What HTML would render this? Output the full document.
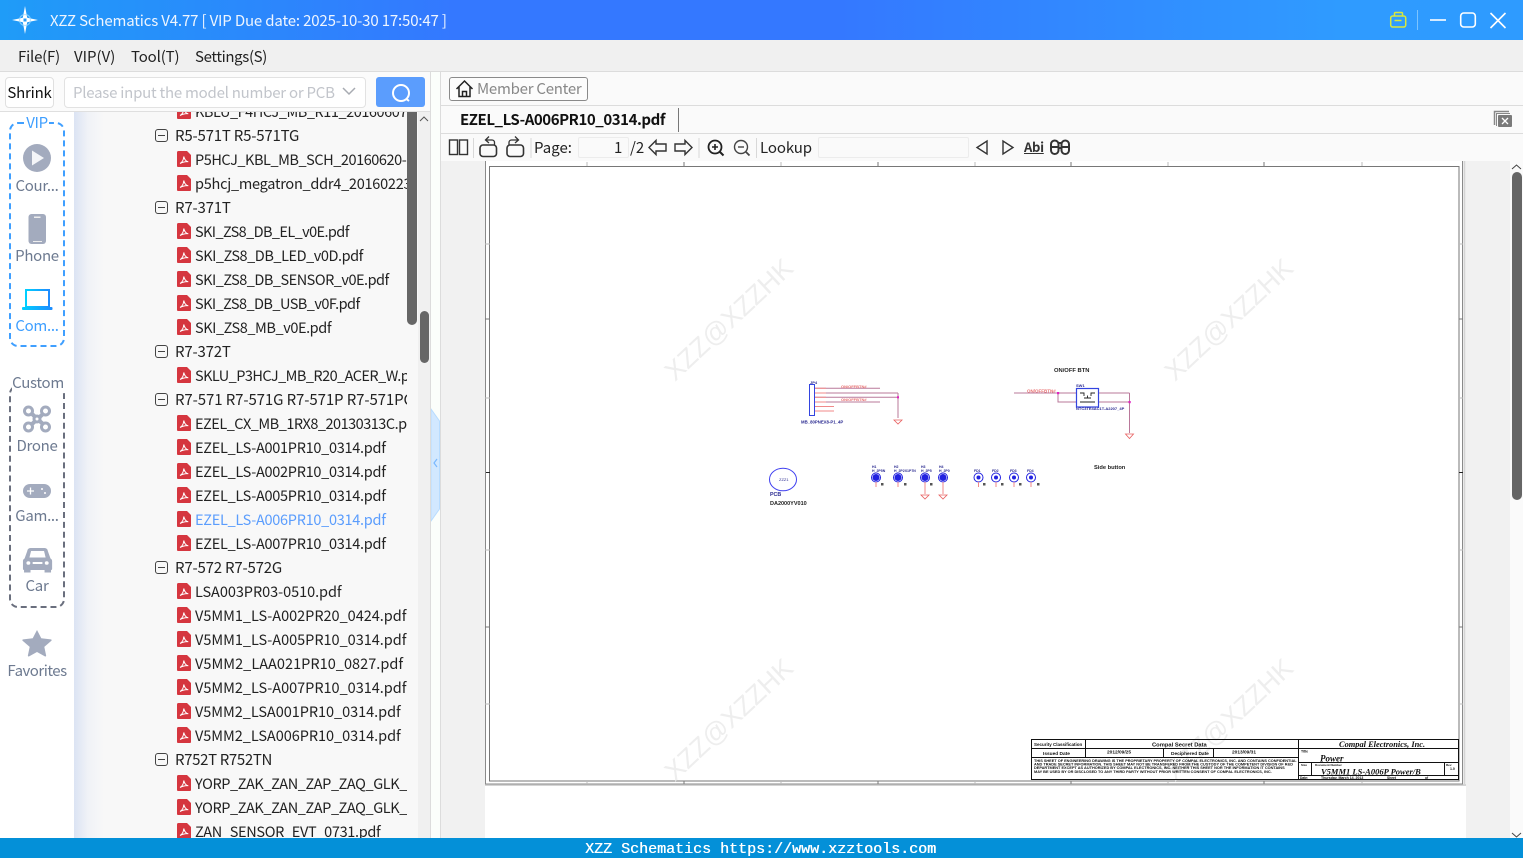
<!DOCTYPE html>
<html><head><meta charset="utf-8"><title>XZZ Schematics</title>
<style>
html,body{margin:0;padding:0;width:1523px;height:858px;overflow:hidden;background:#fff}
body{font-family:"Noto Sans CJK SC","Liberation Sans",sans-serif;font-size:15px;color:#222;position:relative}
.a{position:absolute;white-space:nowrap}
#tree{position:absolute;left:74px;top:112px;width:333px;height:726px;overflow:hidden;background:linear-gradient(90deg,#dbe3f3 0,#f0f2f7 14px,#f8f8f8 30px)}
.r{position:absolute;height:24px;line-height:24px;white-space:nowrap;left:121px;margin-top:1px;font-size:14.5px}
.g{left:101px;font-size:15px;letter-spacing:-.2px}
.p{position:absolute;left:103px;width:14px;height:16px}
.b{position:absolute;left:81px;width:11px;height:11px;border:1.3px solid #444;border-radius:3px}
.b:after{content:"";position:absolute;left:2px;right:2px;top:5px;height:1px;background:#444}
.s{position:absolute;width:74px;left:0;text-align:center;line-height:20px;font-size:15px;letter-spacing:-.3px}
</style></head><body>

<div class="a" style="left:0;top:0;width:1523px;height:40px;background:linear-gradient(90deg,#1f9cf8 0,#3478ff 30%,#3478ff 55%,#2f9bff 88%,#2e9bff 100%)"></div>
<svg class="a" style="left:0;top:0" width="60" height="40"><path d="M25 6 L27.2 17.8 L38 20 L27.2 22.2 L25 34 L22.8 22.2 L12 20 L22.800 17.800Z" fill="#fff"/><circle cx="25" cy="20" r="5.500" fill="none" stroke="#9fdcff" stroke-width="1.200" opacity=".7"/><rect x="23.500" y="18.500" width="3" height="3" fill="#2a9cf5"/></svg>
<div class="a" style="left:50px;top:11px;line-height:20px;color:#eef5ff;font-size:15px;letter-spacing:-.16px">XZZ Schematics V4.77 [ VIP Due date: 2025-10-30 17:50:47 ]</div>
<svg class="a" style="left:1380px;top:0" width="143" height="40" fill="none">
<g stroke="#d9e83c" stroke-width="1.500"><rect x="10.700" y="16" width="15" height="11" rx="2"/><path d="M14.500 16v-2.500a1 1 0 0 1 1-1h6a1 1 0 0 1 1 1V16M14.500 20.500h7"/></g>
<path d="M37.500 10v20" stroke="#7cc4ff" stroke-width="1"/>
<g stroke="#fff" stroke-width="1.600"><path d="M50 20h16"/><rect x="80.700" y="13" width="14.600" height="14" rx="3"/><path d="M110.500 13l15 15M125.500 13l-15 15"/></g></svg>

<div class="a" style="left:0;top:40px;width:1523px;height:31px;background:#f0f0f0;border-bottom:1px solid #dcdcdc"></div>
<div class="a" style="left:18px;top:47px;line-height:20px;letter-spacing:-.2px">File(F)</div>
<div class="a" style="left:74px;top:47px;line-height:20px">VIP(V)</div>
<div class="a" style="left:131px;top:47px;line-height:20px;letter-spacing:-.15px">Tool(T)</div>
<div class="a" style="left:195px;top:47px;line-height:20px;letter-spacing:-.36px">Settings(S)</div>

<div class="a" style="left:0;top:72px;width:440px;height:39px;background:#fbfbfb;border-bottom:1px solid #dfdfdf"></div>
<div class="a" style="left:5px;top:77px;width:47px;height:29px;border:1px solid #e0e0e0;border-radius:4px;background:#fff;text-align:center;line-height:29px;color:#111;letter-spacing:-.2px">Shrink</div>
<div class="a" style="left:64px;top:77px;width:300px;height:29px;border:1px solid #e2e2e2;border-radius:4px;background:#fff"></div>
<div class="a" style="left:73px;top:83px;line-height:20px;color:#c2c5cb;letter-spacing:-.24px">Please input the model number or PCB</div>
<svg class="a" style="left:341px;top:86px" width="16" height="12" fill="none"><path d="M2 2l6 6 6-6" stroke="#a8abb2" stroke-width="1.500"/></svg>
<div class="a" style="left:376px;top:77px;width:49px;height:30px;background:#5b9dfd;border-radius:3px"></div>
<svg class="a" style="left:388px;top:81px" width="26" height="24" fill="none"><circle cx="13" cy="12" r="8" stroke="#fff" stroke-width="2"/><path d="M18.500 18l2.500 2" stroke="#fff" stroke-width="2"/></svg>

<!-- sidebar -->
<div class="a" style="left:0;top:112px;width:74px;height:726px;background:#fff"></div>
<div class="a" style="left:9px;top:122px;width:52px;height:221px;border:2px dashed #3f9fff;border-radius:9px"></div>
<div class="s" style="top:113px;color:#3f9fff"><span style="background:#fff;padding:0 1px">VIP</span></div>
<svg class="a" style="left:0;top:112px" width="74" height="560">
<circle cx="37" cy="46" r="14" fill="#a3abbe"/><path d="M32 38.500v15l12-7.500z" fill="#f4f5f8"/>
<rect x="28.500" y="102" width="17.500" height="30" rx="3" fill="#a3abbe"/><rect x="34" y="104.500" width="6.500" height="1.500" fill="#eee"/><rect x="33" y="129" width="9" height="1" fill="#eee"/>
<defs><linearGradient id="c" x1="0" x2="1" y1="0" y2="0"><stop offset="0" stop-color="#00d0ff"/><stop offset="1" stop-color="#1e8cff"/></linearGradient></defs>
<rect x="26" y="178" width="23" height="17" fill="none" stroke="url(#c)" stroke-width="2"/><rect x="22" y="195" width="30.500" height="3" rx="1" fill="url(#c)"/>
<g fill="none" stroke="#a3abbe" stroke-width="3"><circle cx="28.500" cy="299" r="4"/><circle cx="45.500" cy="299" r="4"/><circle cx="28.500" cy="315" r="4"/><circle cx="45.500" cy="315" r="4"/></g>
<path d="M31 301l13 12M44 301l-13 12" stroke="#a3abbe" stroke-width="4"/><circle cx="37" cy="307" r="4.500" fill="#a3abbe"/><circle cx="37" cy="307" r="1.500" fill="#fff"/>
<rect x="23" y="372" width="28" height="14" rx="7" fill="#a3abbe"/><path d="M27 379h7M30.500 375.500v7" stroke="#fff" stroke-width="1.300"/><circle cx="42" cy="377" r="1" fill="#fff"/><circle cx="45" cy="381" r="1" fill="#fff"/>
<g transform="translate(37 436) scale(1.080 1) translate(-37 -442)"><path d="M28 445a3 3 0 0 1 3-3h13a3 3 0 0 1 3 3l2.500 7.500a3 3 0 0 1 1.500 2.500v8a1 1 0 0 1-1 1v2.500h-6V464H31v2.500h-6V464a1 1 0 0 1-1-1v-8a3 3 0 0 1 1.500-2.500z" fill="#a3abbe"/><path d="M30 451.500l1.500-6.500h12l1.500 6.500z" fill="#fff"/><circle cx="29" cy="457" r="1.800" fill="#fff"/><circle cx="46" cy="457" r="1.800" fill="#fff"/><rect x="33" y="456" width="9" height="2" fill="#fff"/></g>
<g transform="translate(37 518) scale(.95 .85) translate(-37 -518)"><path d="M37 518l4.500 9.700 10 1.300a1 1 0 0 1 .5 1.800l-7.300 7 1.900 10.200c.2 1-.6 1.400-1.300 1L37 543.900l-8.300 5.100c-.7.400-1.500 0-1.300-1l1.900-10.200-7.300-7a1 1 0 0 1 .5-1.800l10-1.300z" fill="#a3abbe"/></g>
</svg>
<div class="s" style="top:176px;color:#6d7a90">Cour...</div>
<div class="s" style="top:246px;color:#6d7a90">Phone</div>
<div class="s" style="top:316px;color:#3f9fff">Com...</div>
<div class="a" style="left:9px;top:385px;width:52px;height:219px;border:2px dashed #6a6f7e;border-radius:9px"></div>
<div class="s" style="top:373px;left:1px;color:#6d7a90"><span style="background:#fff">Custom</span></div>
<div class="s" style="top:436px;color:#6d7a90">Drone</div>
<div class="s" style="top:506px;color:#6d7a90">Gam...</div>
<div class="s" style="top:576px;color:#6d7a90">Car</div>
<div class="s" style="top:661px;color:#6d7a90;letter-spacing:-.5px">Favorites</div>

<!-- tree -->
<div id="tree">
<div class="p" style="top:-9px"><svg width="14" height="16"><use href="#pdf"/></svg></div>
<div class="r" style="top:-13px;letter-spacing:-.45px">KBLU_F4HCJ_MB_R11_20160607</div>
<div class="b" style="top:17px"></div><div class="r g" style="top:11px">R5-571T R5-571TG</div>
<div class="p" style="top:39px"><svg width="14" height="16"><use href="#pdf"/></svg></div><div class="r" style="top:35px;letter-spacing:-.45px">P5HCJ_KBL_MB_SCH_20160620-</div>
<div class="p" style="top:63px"><svg width="14" height="16"><use href="#pdf"/></svg></div><div class="r" style="top:59px;letter-spacing:-.25px">p5hcj_megatron_ddr4_20160223</div>
<div class="b" style="top:89px"></div><div class="r g" style="top:83px">R7-371T</div>
<div class="p" style="top:111px"><svg width="14" height="16"><use href="#pdf"/></svg></div><div class="r" style="top:107px;letter-spacing:-.6px">SKI_ZS8_DB_EL_v0E.pdf</div>
<div class="p" style="top:135px"><svg width="14" height="16"><use href="#pdf"/></svg></div><div class="r" style="top:131px;letter-spacing:-.45px">SKI_ZS8_DB_LED_v0D.pdf</div>
<div class="p" style="top:159px"><svg width="14" height="16"><use href="#pdf"/></svg></div><div class="r" style="top:155px;letter-spacing:-.5px">SKI_ZS8_DB_SENSOR_v0E.pdf</div>
<div class="p" style="top:183px"><svg width="14" height="16"><use href="#pdf"/></svg></div><div class="r" style="top:179px;letter-spacing:-.55px">SKI_ZS8_DB_USB_v0F.pdf</div>
<div class="p" style="top:207px"><svg width="14" height="16"><use href="#pdf"/></svg></div><div class="r" style="top:203px;letter-spacing:-.42px">SKI_ZS8_MB_v0E.pdf</div>
<div class="b" style="top:233px"></div><div class="r g" style="top:227px">R7-372T</div>
<div class="p" style="top:255px"><svg width="14" height="16"><use href="#pdf"/></svg></div><div class="r" style="top:251px;letter-spacing:-.55px">SKLU_P3HCJ_MB_R20_ACER_W.pdf</div>
<div class="b" style="top:281px"></div><div class="r g" style="top:275px;letter-spacing:-.1px">R7-571 R7-571G R7-571P R7-571PG</div>
<div class="p" style="top:303px"><svg width="14" height="16"><use href="#pdf"/></svg></div><div class="r" style="top:299px;letter-spacing:-.5px">EZEL_CX_MB_1RX8_20130313C.pdf</div>
<div class="p" style="top:327px"><svg width="14" height="16"><use href="#pdf"/></svg></div><div class="r" style="top:323px;letter-spacing:-.28px">EZEL_LS-A001PR10_0314.pdf</div>
<div class="p" style="top:351px"><svg width="14" height="16"><use href="#pdf"/></svg></div><div class="r" style="top:347px;letter-spacing:-.28px">EZEL_LS-A002PR10_0314.pdf</div>
<div class="p" style="top:375px"><svg width="14" height="16"><use href="#pdf"/></svg></div><div class="r" style="top:371px;letter-spacing:-.28px">EZEL_LS-A005PR10_0314.pdf</div>
<div class="p" style="top:399px"><svg width="14" height="16"><use href="#pdf"/></svg></div><div class="r" style="top:395px;letter-spacing:-.28px;color:#5b9dfd">EZEL_LS-A006PR10_0314.pdf</div>
<div class="p" style="top:423px"><svg width="14" height="16"><use href="#pdf"/></svg></div><div class="r" style="top:419px;letter-spacing:-.28px">EZEL_LS-A007PR10_0314.pdf</div>
<div class="b" style="top:449px"></div><div class="r g" style="top:443px">R7-572 R7-572G</div>
<div class="p" style="top:471px"><svg width="14" height="16"><use href="#pdf"/></svg></div><div class="r" style="top:467px;letter-spacing:-.05px">LSA003PR03-0510.pdf</div>
<div class="p" style="top:495px"><svg width="14" height="16"><use href="#pdf"/></svg></div><div class="r" style="top:491px;letter-spacing:-.02px">V5MM1_LS-A002PR20_0424.pdf</div>
<div class="p" style="top:519px"><svg width="14" height="16"><use href="#pdf"/></svg></div><div class="r" style="top:515px;letter-spacing:-.02px">V5MM1_LS-A005PR10_0314.pdf</div>
<div class="p" style="top:543px"><svg width="14" height="16"><use href="#pdf"/></svg></div><div class="r" style="top:539px;letter-spacing:.04px">V5MM2_LAA021PR10_0827.pdf</div>
<div class="p" style="top:567px"><svg width="14" height="16"><use href="#pdf"/></svg></div><div class="r" style="top:563px;letter-spacing:-.02px">V5MM2_LS-A007PR10_0314.pdf</div>
<div class="p" style="top:591px"><svg width="14" height="16"><use href="#pdf"/></svg></div><div class="r" style="top:587px;letter-spacing:-.04px">V5MM2_LSA001PR10_0314.pdf</div>
<div class="p" style="top:615px"><svg width="14" height="16"><use href="#pdf"/></svg></div><div class="r" style="top:611px;letter-spacing:-.04px">V5MM2_LSA006PR10_0314.pdf</div>
<div class="b" style="top:641px"></div><div class="r g" style="top:635px;letter-spacing:-.35px">R752T R752TN</div>
<div class="p" style="top:663px"><svg width="14" height="16"><use href="#pdf"/></svg></div><div class="r" style="top:659px;letter-spacing:-.4px">YORP_ZAK_ZAN_ZAP_ZAQ_GLK_</div>
<div class="p" style="top:687px"><svg width="14" height="16"><use href="#pdf"/></svg></div><div class="r" style="top:683px;letter-spacing:-.4px">YORP_ZAK_ZAN_ZAP_ZAQ_GLK_</div>
<div class="p" style="top:711px"><svg width="14" height="16"><use href="#pdf"/></svg></div><div class="r" style="top:707px;letter-spacing:-.33px">ZAN_SENSOR_EVT_0731.pdf</div>
</div>
<svg width="0" height="0" style="position:absolute"><defs><g id="pdf"><path d="M1.500 0H10l4 4v11a1 1 0 0 1-1 1H1a1 1 0 0 1-1-1V1.500A1.500 1.500 0 0 1 1.500 0z" fill="#d5363f"/><path d="M3 12.500c2-1 3.500-3.500 3.800-7 .5 3 2.500 5 4.500 5.200-2.500-.2-5.500.3-8.300 1.800z" fill="none" stroke="#fff" stroke-width="1"/></g></defs></svg>
<div class="a" style="left:407px;top:112px;width:11px;height:726px;background:#f8f8f8"></div>
<div class="a" style="left:407px;top:112px;width:10px;height:213px;background:#666;border-radius:0 0 5px 5px"></div>
<div class="a" style="left:418px;top:112px;width:12px;height:726px;background:#f0f0f0"></div>
<svg class="a" style="left:418px;top:114px" width="12" height="10" fill="none"><path d="M2 7l4-4 4 4" stroke="#555"/></svg>
<div class="a" style="left:420px;top:311px;width:9px;height:52px;background:#666;border-radius:5px"></div>
<div class="a" style="left:430px;top:72px;width:1px;height:766px;background:#dcdcdc"></div>
<div class="a" style="left:431px;top:72px;width:9px;height:766px;background:#fbfefb"></div>
<div class="a" style="left:440px;top:72px;width:1px;height:766px;background:#dcdcdc"></div>
<svg class="a" style="left:431px;top:408px" width="10" height="114"><path d="M0 1l8.500 12v88L0 113z" fill="#d2e8ff" stroke="#b8dcff"/><path d="M6 51l-3 4 3 4" fill="none" stroke="#7ab8ff" stroke-width="1.200"/></svg>

<!-- right top -->
<div class="a" style="left:441px;top:72px;width:1082px;height:33px;background:#fafafa;border-bottom:1px solid #dcdcdc"></div>
<div class="a" style="left:441px;top:106px;width:1082px;height:27px;background:#fafafa;border-bottom:1px solid #dcdcdc"></div>
<div class="a" style="left:441px;top:134px;width:1082px;height:27px;background:#fafafa"></div>
<div class="a" style="left:449px;top:77px;width:137px;height:22px;border:1px solid #8a8a8a;border-radius:3px;background:#fcfcfc"></div>
<svg class="a" style="left:455px;top:79px" width="20" height="20" fill="none" stroke="#222" stroke-width="1.500"><path d="M1.500 10L9.500 2l8 8M4 8v9.500h11V8M7.500 17.500v-5h4v5"/></svg>
<div class="a" style="left:477px;top:79px;line-height:20px;color:#888;letter-spacing:-.25px">Member Center</div>
<div class="a" style="left:460px;top:110px;line-height:20px;font-weight:700;color:#111;letter-spacing:-.44px">EZEL_LS-A006PR10_0314.pdf</div>
<div class="a" style="left:678px;top:108px;width:1px;height:24px;background:#777"></div>
<svg class="a" style="left:1490px;top:107px" width="26" height="24" fill="none"><path d="M4.500 18V4.500H19" stroke="#888" stroke-width="1.500"/><path d="M6.500 19V6.500H20" stroke="#888" stroke-width="1"/><rect x="8" y="8" width="14" height="12" rx="1" fill="#7a7a7a"/><path d="M12 11l6 6M18 11l-6 6" stroke="#fff" stroke-width="1.300"/></svg>

<!-- toolbar -->
<svg class="a" style="left:441px;top:134px" width="600" height="27" fill="none" stroke="#333" stroke-width="1.400">
<rect x="8.500" y="6" width="8" height="14.500"/><rect x="18.500" y="6" width="8" height="14.500"/>
<path d="M32.500 4v20M90 4v20M258 4v20M315.500 4v20" stroke="#d8d8d8" stroke-width="1"/>
<rect x="39" y="11" width="16.500" height="11.500" rx="3" stroke-width="1.600"/><path d="M53.500 11V8.500a2.500 2.500 0 0 0-2.500-2.500H45M48 2.500L44.500 6l3.500 3" stroke-width="1.300"/>
<rect x="66" y="11" width="16.500" height="11.500" rx="3" stroke-width="1.600"/><path d="M68 11V8.500a2.500 2.500 0 0 1 2.500-2.500H77M74 2.500L77.500 6 74 9" stroke-width="1.300"/>
<path d="M208 13.500l7-7v3.500h10v7h-10v3.500z"/><path d="M251 13.500l-7-7v3.500h-10v7h10v3.500z"/>
<circle cx="274" cy="13" r="6.500" stroke-width="1.800" stroke="#222"/><path d="M271 13h6M274 10v6" stroke-width="1.600" stroke="#222"/><path d="M279 18l3.500 3.500" stroke-width="2" stroke="#222"/>
<circle cx="300" cy="13" r="6.500" stroke="#444"/><path d="M297 13h6" stroke="#444"/><path d="M305 18l3.500 3.500" stroke="#444" stroke-width="1.800"/>
<path d="M546 7v13l-10-6.500zM562 7v13l10-6.500z"/>
</svg>
<div class="a" style="left:534px;top:138px;line-height:20px">Page:</div>
<div class="a" style="left:578px;top:137px;width:49px;height:19px;border:1px solid #ececec;border-radius:2px;background:#fafafa"></div>
<div class="a" style="left:614px;top:138px;line-height:20px">1</div>
<div class="a" style="left:630px;top:138px;line-height:20px">/2</div>
<div class="a" style="left:760px;top:138px;line-height:20px;letter-spacing:-.1px">Lookup</div>
<div class="a" style="left:818px;top:137px;width:149px;height:19px;border:1px solid #ececec;border-radius:2px;background:#fafafa"></div>
<div class="a" style="left:1024px;top:138px;font-size:13px;line-height:17px;font-weight:700;text-decoration:underline;color:#333;letter-spacing:-.3px">Abi</div>
<svg class="a" style="left:1049px;top:137px" width="24" height="20" fill="none" stroke="#333" stroke-width="2"><rect x="2" y="3.500" width="7.500" height="13.500" rx="3.700"/><rect x="12.500" y="3.500" width="7.500" height="13.500" rx="3.700"/><path d="M9.500 6h3M9.500 11h3M3 10h6M13 10h6"/></svg>

<!-- viewer -->
<div class="a" style="left:441px;top:161px;width:1069px;height:677px;background:#f1f1f1"></div>
<div class="a" style="left:1510px;top:161px;width:13px;height:677px;background:#fafafa"></div>
<div class="a" style="left:1512px;top:172px;width:10px;height:328px;background:#666;border-radius:5px"></div>
<svg class="a" style="left:1510px;top:163px" width="13" height="8" fill="none"><path d="M2 6l4.500-4 4.500 4" stroke="#444"/></svg>
<svg class="a" style="left:1510px;top:832px" width="13" height="6" fill="none"><path d="M2 1l4.500 4 4.500-4" stroke="#444"/></svg>
<div class="a" style="left:485px;top:785px;width:981px;height:53px;background:#fff"></div>
<svg class="a" style="left:0;top:0" width="1523" height="858" font-family="Liberation Sans, sans-serif">
<rect x="485" y="161" width="981" height="624" fill="#fff"/>
<path d="M1464.500 161v624M485 785h981" stroke="#d4d4d4" stroke-width="2" fill="none"/>
<path d="M485.500 161v623h977V161" fill="none" stroke="#8a8a8a"/>
<rect x="489.500" y="166.500" width="969.500" height="614.500" fill="none" stroke="#777"/>
<path d="M485 244h5M485 398h5M485 550h5M485 704h5M1459 244h4M1459 398h4M1459 550h4M1459 704h4M587 162v4M781 162v4M975 162v4M1168 162v4M1362 162v4M587 781v3M781 781v3M975 781v3M1168 781v3M1362 781v3" stroke="#bbb"/>
<path d="M485 319h5M485 627h5M1459 319h4M1459 627h4M684 162v4M878 162v4M1071 162v4M1264 162v4M684 781v3M878 781v3M1071 781v3M1264 781v3" stroke="#777"/>
<path d="M486 472.500h4M1459 472.500h4" stroke="#222"/>
<g fill="#eeeeee" font-size="26.500" font-family="Liberation Sans, sans-serif">
<text transform="translate(675,382) rotate(-43)">XZZ@XZZHK</text>
<text transform="translate(1175,382) rotate(-43)">XZZ@XZZHK</text>
<text transform="translate(675,782) rotate(-43)">XZZ@XZZHK</text>
<text transform="translate(1175,782) rotate(-43)">XZZ@XZZHK</text>
</g>
<!-- connector -->
<g fill="none">
<path d="M814 388.300h66M814 393h84M814 397.300h84M814 402h66M898 393v25" stroke="#b9789a" stroke-width="1"/>
<path d="M814 388.300h12M814 393h12M814 397.300h12M814 402h12M814 406.500h20M814 411h20" stroke="#f08a8a" stroke-width="1"/>
<rect x="809.500" y="384.500" width="5" height="31" stroke="#3344e0" stroke-width="1" fill="#fff"/>
<path d="M894 420h8l-4 4z" stroke="#e86060" stroke-width=".8"/>
<rect x="897" y="396.300" width="2" height="2" fill="#e020c0"/>
</g>
<g font-size="4" fill="#e87070" font-weight="700"><text x="841" y="388">ON/OFFBTN#</text><text x="841" y="401">ON/OFFBTN#</text></g>
<text x="810" y="384" font-size="4" fill="#2a2a90" font-weight="700">JP4</text>
<text x="801" y="423.500" font-size="4.300" fill="#2a2a90" font-weight="700">MB_80PNEX8-P1_4P</text>
<ellipse cx="783" cy="479.500" rx="13.500" ry="11.300" fill="none" stroke="#4040f0" stroke-width="1"/>
<text x="779" y="481" font-size="4" fill="#2a2a90">ZZZ1</text>
<text x="770" y="496" font-size="5.300" font-weight="700" fill="#2a2a90">PCB</text>
<text x="770" y="505" font-size="5.500" font-weight="700" fill="#222">DA2000YV010</text>
<!-- holes -->
<g fill="#2222e0" stroke="#2222e0"><circle cx="876" cy="477.500" r="3"/><circle cx="898" cy="477.500" r="3"/><circle cx="925" cy="477.500" r="3"/><circle cx="943" cy="477.500" r="3"/></g>
<g fill="none" stroke="#2222e0"><circle cx="876" cy="477.500" r="4.500"/><circle cx="898" cy="477.500" r="4.500"/><circle cx="925" cy="477.500" r="4.500"/><circle cx="943" cy="477.500" r="4.500"/><circle cx="978.500" cy="477.500" r="4.500"/><circle cx="996" cy="477.500" r="4.500"/><circle cx="1014" cy="477.500" r="4.500"/><circle cx="1031" cy="477.500" r="4.500"/></g>
<g fill="#2222e0"><circle cx="978.500" cy="477.500" r="2"/><circle cx="996" cy="477.500" r="2"/><circle cx="1014" cy="477.500" r="2"/><circle cx="1031" cy="477.500" r="2"/></g>
<path d="M876 482v5M898 482v5M925 482v12M943 482v12M978.500 482v5M996 482v5M1014 482v5M1031 482v5" stroke="#f08a8a" fill="none"/>
<path d="M921 495h8l-4 4zM939 495h8l-4 4z" fill="none" stroke="#e86060" stroke-width=".8"/>
<g fill="#555"><rect x="881" y="483" width="2.500" height="2.500"/><rect x="904" y="483" width="2.500" height="2.500"/><rect x="930" y="483" width="2.500" height="2.500"/><rect x="983" y="483" width="2.500" height="2.500"/><rect x="1001" y="483" width="2.500" height="2.500"/><rect x="1019" y="483" width="2.500" height="2.500"/><rect x="1037" y="483" width="2.500" height="2.500"/></g>
<g font-size="3.500" fill="#2a2a90" font-weight="700"><text x="872" y="468">H1</text><text x="872" y="472">H_2P5N</text><text x="894" y="468">H2</text><text x="894" y="472">H_2P2X1P7N</text><text x="921" y="468">H3</text><text x="921" y="472">H_2P5</text><text x="939" y="468">H4</text><text x="939" y="472">H_2P0</text><text x="974" y="472">FD1</text><text x="992" y="472">FD2</text><text x="1010" y="472">FD3</text><text x="1027" y="472">FD4</text></g>
<!-- button -->
<g fill="none">
<path d="M1014 393h62M1058 393v9h18M1099 393h30.500M1099 402h30.500M1129.500 393v40" stroke="#b9789a" stroke-width="1"/>
<rect x="1076.500" y="388.500" width="22" height="18.500" stroke="#3344e0" stroke-width="1.200" fill="#fff"/>
<path d="M1080 393h4v3M1095 393h-4v3M1084 398h7M1087.500 395.500v2.500M1080 402h15" stroke="#222" stroke-width=".9"/>
<path d="M1125.500 434h8l-4 4.500z" stroke="#e86060" stroke-width=".8"/>
<rect x="1057" y="392" width="2.200" height="2.200" fill="#e020c0"/>
<rect x="1128.500" y="401" width="2.200" height="2.200" fill="#e020c0"/>
</g>
<text x="1027" y="392.500" font-size="4.500" fill="#e87070" font-weight="700">ON/OFFBTN#</text>
<text x="1054" y="372" font-size="5.800" font-weight="700" fill="#222">ON/OFF BTN</text>
<text x="1076" y="387" font-size="4" font-weight="700" fill="#2a2a90">SW1</text>
<text x="1076" y="410" font-size="4" font-weight="700" fill="#2a2a90">NTC3TE4AC1T-A2207_4P</text>
<text x="1094" y="469" font-size="5.700" font-weight="700" fill="#222">Side button</text>
<!-- title block -->
<g fill="none" stroke="#111" stroke-width="1">
<rect x="1031.500" y="739.500" width="427" height="40"/>
<path d="M1031.500 748.500h427M1031.500 757.500h266.500M1085.500 739.500v18M1163.500 748.500v9M1213.500 748.500v9M1298.500 739.500v40M1298.500 762.500h160M1298.500 775.500h160M1311.500 762.500v13M1444.500 762.500v13"/>
</g>
<g fill="#111" font-weight="700">
<text x="1034" y="746" font-size="4.500">Security Classification</text>
<text x="1152" y="746.500" font-size="5.800">Compal Secret Data</text>
<text x="1339" y="747" font-size="8.400" font-family="Liberation Serif, serif" font-style="italic">Compal Electronics, Inc.</text>
<text x="1043" y="755" font-size="4.800">Issued Date</text><text x="1107" y="753.500" font-size="4.800">2012/09/25</text>
<text x="1171" y="755" font-size="4.800">Deciphered Date</text><text x="1232" y="753.500" font-size="4.800">2013/09/31</text>
<text x="1301" y="752.500" font-size="3.500">Title</text>
<text x="1320" y="761.500" font-size="9" font-family="Liberation Serif, serif" font-style="italic">Power</text>
<text x="1034" y="762" font-size="3.850">THIS SHEET OF ENGINEERING DRAWING IS THE PROPRIETARY PROPERTY OF COMPAL ELECTRONICS, INC. AND CONTAINS CONFIDENTIAL</text>
<text x="1034" y="765.500" font-size="3.850">AND TRADE SECRET INFORMATION. THIS SHEET MAY NOT BE TRANSFERED FROM THE CUSTODY OF THE COMPETENT DIVISION OF R&amp;D</text>
<text x="1034" y="769" font-size="3.850">DEPARTMENT EXCEPT AS AUTHORIZED BY COMPAL ELECTRONICS, INC. NEITHER THIS SHEET NOR THE INFORMATION IT CONTAINS</text>
<text x="1034" y="772.800" font-size="3.850">MAY BE USED BY OR DISCLOSED TO ANY THIRD PARTY WITHOUT PRIOR WRITTEN CONSENT OF COMPAL ELECTRONICS, INC.</text>
<text x="1301" y="766" font-size="3">Size</text><text x="1315" y="766" font-size="3">Document Number</text>
<text x="1321" y="774.500" font-size="8.500" font-family="Liberation Serif, serif" font-style="italic">V5MM1 LS-A006P Power/B</text>
<text x="1446" y="766" font-size="3">Rev</text><text x="1450" y="770" font-size="3.500">1.0</text>
<text x="1300" y="779" font-size="3.300">Date:</text><text x="1321" y="779" font-size="3.500">Thursday, March 14, 2013</text><text x="1387" y="779" font-size="3.300">Sheet</text><text x="1425" y="779" font-size="3.300">of</text>
</g>
</svg>

<div class="a" style="left:0;top:838px;width:1523px;height:20px;background:#0490d8"></div>
<div class="a" style="left:585px;top:840px;font-family:'Liberation Mono',monospace;font-size:15px;line-height:19px;color:#fff;text-shadow:.4px 0 #fff">XZZ Schematics https://www.xzztools.com</div>
</body></html>
